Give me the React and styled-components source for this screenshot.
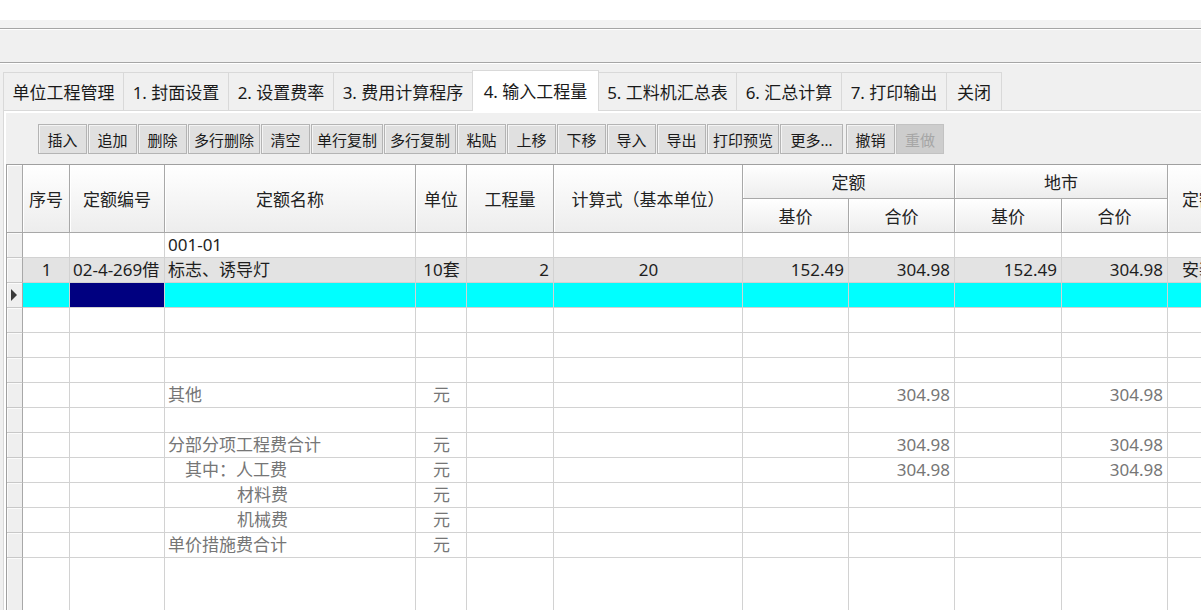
import React from "react";
import styled, { createGlobalStyle, css } from "styled-components";

const GlobalStyle = createGlobalStyle`
  html, body {
    margin: 0;
    padding: 0;
  }
  body {
    background: #f0f0f0;
    font-family: "Noto Sans", "Noto Sans CJK SC", sans-serif;
    color: #1e1e1e;
    overflow: hidden;
  }
`;

const Window = styled.div`
  width: 1201px;
  height: 610px;
  display: flex;
  flex-direction: column;
  overflow: hidden;
  background: #f0f0f0;
`;

const TitleStrip = styled.div`
  flex: none;
  height: 20px;
  background: #ffffff;
`;

const MenuStrip = styled.div`
  flex: none;
  height: 8px;
  background: #f3f3f3;
  border-bottom: 1px solid #a6a6a6;
`;

const ToolStrip = styled.div`
  flex: none;
  height: 32px;
  border-top: 1px solid #ffffff;
  border-bottom: 1px solid #a6a6a6;
`;

const TabBar = styled.div`
  flex: none;
  height: 47px;
  display: flex;
  align-items: flex-end;
  padding-left: 3px;
  border-top: 1px solid #ffffff;
  box-sizing: border-box;
`;

const Tab = styled.div`
  width: ${(p) => p.$w}px;
  height: ${(p) => (p.$active ? 41 : 38)}px;
  box-sizing: border-box;
  display: flex;
  align-items: center;
  justify-content: center;
  margin-right: -1px;
  font-size: 17px;
  color: #1a1a1a;
  white-space: nowrap;
  background: #f0f0f0;
  border: 1px solid #d9d9d9;
  border-bottom: none;
  ${(p) =>
    p.$active &&
    css`
      position: relative;
      z-index: 1;
      margin-bottom: -1px;
      background: #ffffff;
      padding-bottom: 2px;
    `}
`;

const Panel = styled.div`
  flex: 1;
  min-height: 0;
  display: flex;
  flex-direction: column;
  margin-left: 3px;
  padding: 13px 0 0 2px;
  border-top: 1px solid #d9d9d9;
  border-left: 1px solid #d9d9d9;
  box-shadow: inset 2px 2px 0 #ffffff;
`;

const Toolbar = styled.div`
  flex: none;
  display: flex;
  height: 30px;
  margin: 0 0 10px 32px;
`;

const ToolButton = styled.button`
  width: ${(p) => p.$w}px;
  height: 30px;
  margin: 0 ${(p) => (p.$gap ? 3 : 1)}px 0 0;
  padding: 0;
  font-family: inherit;
  font-size: 15px;
  color: #1a1a1a;
  white-space: nowrap;
  background: #e0e0e0;
  border: 1px solid #b4b4b4;
  border-radius: 0;
  box-shadow: inset 1px 1px 0 #f4f4f4;
  ${(p) =>
    p.disabled &&
    css`
      background: #cdcdcd;
      color: #a6a6a6;
      border-color: #c2c2c2;
      box-shadow: none;
    `}
`;

const GridFrame = styled.div`
  flex: 1;
  min-height: 0;
  overflow: hidden;
  background: #ffffff;
  border-top: 1px solid #a0a0a0;
  border-left: 1px solid #a0a0a0;
`;

const Table = styled.table`
  width: 1265px;
  table-layout: fixed;
  border-collapse: separate;
  border-spacing: 0;
  font-size: 17px;
`;

const HeadRow = styled.tr`
  height: 34px;
`;

const HeadCell = styled.th`
  padding: 0 0 0 ${(p) => p.$lead || 0}px;
  font-weight: normal;
  font-size: 17px;
  color: #222222;
  text-align: ${(p) => (p.$lead ? "left" : "center")};
  white-space: nowrap;
  overflow: hidden;
  background: linear-gradient(#ffffff, #ededed);
  border-right: 1px solid #a8a8a8;
  border-bottom: 1px solid #a8a8a8;
  box-shadow: inset 1px 1px 0 #ffffff;
`;

const HeadIndicator = styled(HeadCell)`
  background: #efefef;
`;

const toneBg = {
  gray: "#e3e3e3",
  current: "#00ffff",
};

const DataRow = styled.tr`
  height: 25px;
  background: ${(p) => toneBg[p.$tone] || "#ffffff"};
`;

const FillerRow = styled.tr`
  height: 60px;
`;

const Indicator = styled.td`
  padding: 0 0 0 4px;
  background: #efefef;
  border-right: 1px solid #a8a8a8;
  border-bottom: 1px solid #c8c8c8;
  box-shadow: inset 1px 1px 0 #fbfbfb;
  ${(p) =>
    p.$open &&
    css`
      border-bottom: none;
    `}
`;

const Pointer = styled.span`
  display: block;
  width: 0;
  height: 0;
  border-left: 6px solid #3a3a3a;
  border-top: 6px solid transparent;
  border-bottom: 6px solid transparent;
`;

const Cell = styled.td`
  padding: 0 ${(p) => (p.$align === "right" ? 4 : 2)}px 0
    ${(p) => 3 + (p.$indent || 0)}px;
  line-height: 24px;
  text-align: ${(p) => p.$align || "left"};
  color: ${(p) => (p.$muted ? "#767676" : "#1e1e1e")};
  white-space: nowrap;
  overflow: hidden;
  border-right: 1px solid #d2d2d2;
  border-bottom: 1px solid #d2d2d2;
  ${(p) =>
    p.$focus &&
    css`
      background: #000080;
    `}
  ${(p) =>
    p.$open &&
    css`
      border-bottom: none;
    `}
`;

const tabs = [
  { label: "单位工程管理", w: 121 },
  { label: "1. 封面设置", w: 106 },
  { label: "2. 设置费率", w: 106 },
  { label: "3. 费用计算程序", w: 140 },
  { label: "4. 输入工程量", w: 127, active: true },
  { label: "5. 工料机汇总表", w: 139 },
  { label: "6. 汇总计算", w: 106 },
  { label: "7. 打印输出", w: 106 },
  { label: "关闭", w: 56 },
];

const buttons = [
  { label: "插入", w: 49 },
  { label: "追加", w: 49 },
  { label: "删除", w: 49 },
  { label: "多行删除", w: 72 },
  { label: "清空", w: 49 },
  { label: "单行复制", w: 72 },
  { label: "多行复制", w: 72 },
  { label: "粘贴", w: 49 },
  { label: "上移", w: 49 },
  { label: "下移", w: 49 },
  { label: "导入", w: 49 },
  { label: "导出", w: 49 },
  { label: "打印预览", w: 72 },
  { label: "更多...", w: 63, gap: true },
  { label: "撤销", w: 49 },
  { label: "重做", w: 48, disabled: true },
];

const colWidths = [16, 47, 95, 251, 51, 87, 189, 106, 106, 107, 106, 104];

const columns = [
  { key: "seq", align: "center" },
  { key: "code" },
  { key: "name" },
  { key: "unit", align: "center" },
  { key: "qty", align: "right" },
  { key: "formula", align: "center" },
  { key: "base", align: "right" },
  { key: "total", align: "right" },
  { key: "cityBase", align: "right" },
  { key: "cityTotal", align: "right" },
  { key: "kind", indent: 11 },
];

const rows = [
  { name: "001-01" },
  {
    tone: "gray",
    seq: "1",
    code: "02-4-269借",
    name: "标志、诱导灯",
    unit: "10套",
    qty: "2",
    formula: "20",
    base: "152.49",
    total: "304.98",
    cityBase: "152.49",
    cityTotal: "304.98",
    kind: "安装",
  },
  { tone: "current" },
  {},
  {},
  {},
  { muted: true, name: "其他", unit: "元", total: "304.98", cityTotal: "304.98" },
  {},
  {
    muted: true,
    name: "分部分项工程费合计",
    unit: "元",
    total: "304.98",
    cityTotal: "304.98",
  },
  {
    muted: true,
    name: "其中：人工费",
    indent: 17,
    unit: "元",
    total: "304.98",
    cityTotal: "304.98",
  },
  { muted: true, name: "材料费", indent: 69, unit: "元" },
  { muted: true, name: "机械费", indent: 69, unit: "元" },
  { muted: true, name: "单价措施费合计", unit: "元" },
];

export default function App() {
  return (
    <>
      <GlobalStyle />
      <Window>
        <TitleStrip />
        <MenuStrip />
        <ToolStrip />
        <TabBar>
          {tabs.map((t) => (
            <Tab key={t.label} $w={t.w} $active={t.active}>
              {t.label}
            </Tab>
          ))}
        </TabBar>
        <Panel>
          <Toolbar>
            {buttons.map((b) => (
              <ToolButton
                key={b.label}
                $w={b.w}
                $gap={b.gap}
                disabled={b.disabled}
              >
                {b.label}
              </ToolButton>
            ))}
          </Toolbar>
          <GridFrame>
            <Table>
              <colgroup>
                {colWidths.map((w, i) => (
                  <col key={i} style={{ width: w }} />
                ))}
              </colgroup>
              <thead>
                <HeadRow>
                  <HeadIndicator rowSpan={2} />
                  <HeadCell rowSpan={2}>序号</HeadCell>
                  <HeadCell rowSpan={2}>定额编号</HeadCell>
                  <HeadCell rowSpan={2}>定额名称</HeadCell>
                  <HeadCell rowSpan={2}>单位</HeadCell>
                  <HeadCell rowSpan={2}>工程量</HeadCell>
                  <HeadCell rowSpan={2}>计算式（基本单位）</HeadCell>
                  <HeadCell colSpan={2}>定额</HeadCell>
                  <HeadCell colSpan={2}>地市</HeadCell>
                  <HeadCell rowSpan={2} $lead={14}>
                    定额类别
                  </HeadCell>
                </HeadRow>
                <HeadRow>
                  <HeadCell>基价</HeadCell>
                  <HeadCell>合价</HeadCell>
                  <HeadCell>基价</HeadCell>
                  <HeadCell>合价</HeadCell>
                </HeadRow>
              </thead>
              <tbody>
                {rows.map((r, i) => (
                  <DataRow key={i} $tone={r.tone}>
                    <Indicator>{r.tone === "current" && <Pointer />}</Indicator>
                    {columns.map((c) => (
                      <Cell
                        key={c.key}
                        $align={c.align}
                        $muted={r.muted}
                        $indent={c.key === "name" ? r.indent : c.indent}
                        $focus={r.tone === "current" && c.key === "code"}
                      >
                        {r[c.key]}
                      </Cell>
                    ))}
                  </DataRow>
                ))}
                <FillerRow>
                  <Indicator $open />
                  {columns.map((c) => (
                    <Cell key={c.key} $open />
                  ))}
                </FillerRow>
              </tbody>
            </Table>
          </GridFrame>
        </Panel>
      </Window>
    </>
  );
}
